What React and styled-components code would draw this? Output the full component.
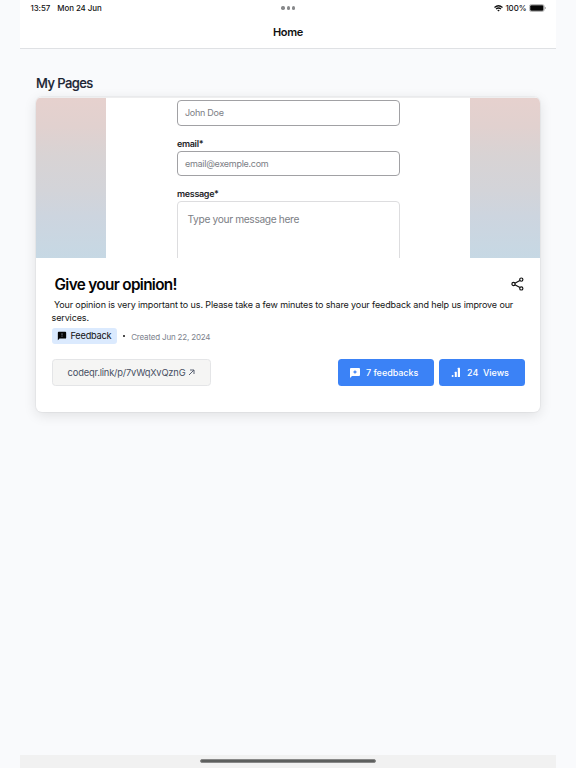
import React from "react";
import styled, { createGlobalStyle } from "styled-components";

const GlobalStyle = createGlobalStyle`
  * { box-sizing: border-box; }
  body {
    margin: 0;
    background: #f9fafc;
    font-family: Inter, "Liberation Sans", sans-serif;
    color: #111;
  }
`;

const Screen = styled.div`
  width: 536px;
  height: 768px;
  margin: 0 auto;
  display: flex;
  flex-direction: column;
  overflow: visible;
`;

const Header = styled.header`
  height: 49px;
  flex: none;
  background: #fff;
  border-bottom: 1px solid #dfe1e4;
  display: flex;
  flex-direction: column;
`;

const StatusBar = styled.div`
  height: 16px;
  display: grid;
  grid-template-columns: 1fr auto 1fr;
  align-items: center;
  padding: 0 10px 0 10.5px;
  font-size: 7.9px;
  font-weight: 500;
  letter-spacing: -0.05px;
  line-height: 16px;
  color: #111;
`;

const Clock = styled.div`
  display: flex;
  gap: 7px;
  white-space: nowrap;
`;

const Dots = styled.div`
  display: flex;
  gap: 2px;
  span {
    width: 3.4px;
    height: 3.4px;
    border-radius: 50%;
    background: #88898b;
  }
`;

const Indicators = styled.div`
  display: flex;
  justify-content: flex-end;
  align-items: center;
  gap: 2.5px;
`;

const HeaderTitle = styled.h1`
  margin: 8px 0 0;
  text-align: center;
  font-size: 11px;
  line-height: 16px;
  font-weight: 600;
  letter-spacing: -0.3px;
`;

const Main = styled.main`
  flex: 1;
  padding: 25px 16px 0;
`;

const SectionTitle = styled.h2`
  margin: 0 0 5px;
  height: 18px;
  font-size: 13px;
  line-height: 18px;
  font-weight: 500;
  letter-spacing: -0.56px;
  color: #1b2433;
  -webkit-text-stroke: 0.15px #1b2433;
`;

const Card = styled.article`
  height: 315px;
  border-radius: 6px;
  background: #fff;
  overflow: hidden;
  box-shadow: 0 0 0 1px rgba(0, 0, 0, 0.03), 0 3px 13px rgba(0, 0, 0, 0.11);
`;

const Preview = styled.div`
  height: 161px;
  padding: 0 70px;
  border-top: 1px solid #eeeeef;
  background: linear-gradient(#e6d1ce 0%, #e1d1cf 18%, #d8d3d4 36%, #d3d4d9 58%, #cdd5df 74%, #c6d8e4 100%);
`;

const PreviewPage = styled.div`
  height: 100%;
  background: #fff;
  padding: 2px 70px 0 71px;
  overflow: hidden;
`;

const Field = styled.div`
  height: ${(p) => (p.$tall ? 70 : 25.5)}px;
  border: 1px solid ${(p) => (p.$tall ? "#dddddf" : "#a1a1a4")};
  border-radius: 4px;
  padding: ${(p) => (p.$tall ? "5px 9.5px" : "0 7px")};
  font-size: ${(p) => (p.$tall ? 10.2 : 9)}px;
  letter-spacing: ${(p) => (p.$tall ? -0.34 : -0.27)}px;
  line-height: ${(p) => (p.$tall ? 25 : 24)}px;
  color: #7c7e85;
`;

const FieldLabel = styled.div`
  height: 25px;
  padding-top: 12px;
  font-size: 9px;
  line-height: 11px;
  font-weight: 600;
  letter-spacing: -0.33px;
  color: #242528;
`;

const Body = styled.div`
  padding: 17px 15.5px 0;
`;

const TitleRow = styled.div`
  display: flex;
  justify-content: space-between;
  align-items: flex-start;
  height: 20px;
  padding-left: 3px;
`;

const CardTitle = styled.h3`
  margin: 0;
  font-size: 15.3px;
  line-height: 20px;
  font-weight: 600;
  letter-spacing: -0.66px;
  color: #050505;
`;

const Description = styled.p`
  margin: 3px 0 0;
  font-size: 9px;
  line-height: 13px;
  letter-spacing: -0.12px;
  color: #151515;
  white-space: pre;
`;

const Meta = styled.div`
  display: flex;
  align-items: center;
  height: 16px;
  margin-top: 3.5px;
`;

const Tag = styled.span`
  display: flex;
  align-items: center;
  gap: 4px;
  width: 65px;
  height: 16px;
  padding-left: 5px;
  border-radius: 3px;
  background: #dbeafe;
  font-size: 9.2px;
  letter-spacing: -0.2px;
  line-height: 15px;
  white-space: nowrap;
`;

const Bullet = styled.span`
  width: 2px;
  height: 2px;
  border-radius: 50%;
  background: #111;
  margin: 0 6.2px 0 6.5px;
`;

const Created = styled.time`
  font-size: 8px;
  letter-spacing: -0.18px;
  line-height: 12px;
  padding-top: 2px;
  color: #7c828d;
  white-space: nowrap;
`;

const Actions = styled.div`
  display: flex;
  gap: 5px;
  margin-top: 15.5px;
`;

const LinkBox = styled.a`
  display: flex;
  align-items: center;
  justify-content: center;
  gap: 2.5px;
  width: 159.5px;
  height: 27px;
  margin-right: auto;
  border: 1px solid #e4e5e7;
  border-radius: 3.5px;
  background: #f5f5f4;
  color: #475063;
  font-size: 9.3px;
  letter-spacing: -0.17px;
  white-space: nowrap;
`;

const Button = styled.button`
  display: flex;
  align-items: center;
  gap: ${(p) => p.$gap}px;
  width: ${(p) => p.$width}px;
  height: 27px;
  padding: 0 0 0 11px;
  border: 0;
  border-radius: 3.5px;
  background: #3b82f6;
  color: #fff;
  font: 500 9px Inter, "Liberation Sans", sans-serif;
  letter-spacing: -0.03px;
  white-space: pre;
`;

const HomeBar = styled.footer`
  height: 13px;
  flex: none;
  background: #f1f1f1;
  display: flex;
  justify-content: center;
  padding-top: 4px;
  span {
    width: 176px;
    height: 4px;
    border-radius: 2px;
    background: #5d5f5e;
    border: 0.5px solid #888;
  }
`;

const WifiIcon = () => (
  <svg width="9" height="7" viewBox="0 0 18 14">
    <path d="M1 5Q9 -2 17 5M4 8Q9 4 14 8" fill="none" stroke="#111" strokeWidth="2.5" />
    <path d="M6.5 10.3Q9 8.3 11.5 10.3L9 13Z" fill="#111" />
  </svg>
);

const BatteryIcon = () => (
  <svg width="17" height="8" viewBox="0 0 17 8">
    <rect x=".4" y=".5" width="14.8" height="7" rx="2" fill="#fff" stroke="#999" strokeWidth=".7" />
    <rect x="1.2" y="1.3" width="13.2" height="5.4" rx="1.2" fill="#050505" />
    <path d="M15.9 2.8q1 .4 1 1.2t-1 1.2z" fill="#999" />
  </svg>
);

const ShareIcon = () => (
  <svg width="14" height="18" viewBox="0 -2 14 18" fill="none" stroke="#111" strokeWidth="1.15">
    <circle cx="2.5" cy="7" r="1.6" />
    <circle cx="10.3" cy="2.6" r="1.6" />
    <circle cx="10.3" cy="11.4" r="1.6" />
    <path d="M3.9 6.2L8.9 3.4M3.9 7.8L8.9 10.6" />
  </svg>
);

const FeedbackIcon = () => (
  <svg width="10" height="10" viewBox="0 0 24 24">
    <path d="M20 2H4a2 2 0 0 0-2 2v18l4-4h14a2 2 0 0 0 2-2V4a2 2 0 0 0-2-2z" fill="#050505" />
    <path d="M11.2 5.5h1.6v5h-1.6zM11.2 12.5h1.6v1.8h-1.6z" fill="#a9b5c9" />
  </svg>
);

const ReviewIcon = () => (
  <svg width="12" height="12" viewBox="0 0 24 24">
    <path d="M20 2H4a2 2 0 0 0-2 2v18l4-4h14a2 2 0 0 0 2-2V4a2 2 0 0 0-2-2z" fill="#fff" />
    <path d="M12 5.4l1.3 3.2L16.6 10l-3.3 1.4L12 14.6l-1.3-3.2L7.4 10l3.3-1.4z" fill="#3b82f6" />
  </svg>
);

const BarsIcon = () => (
  <svg width="11" height="11" viewBox="0 0 11 11" fill="#fff">
    <rect x="1.6" y="8" width="2" height="2.1" rx="1" />
    <rect x="4.8" y="4.8" width="2" height="5.3" rx=".4" />
    <rect x="7.8" y=".8" width="2.2" height="9.3" rx=".4" />
  </svg>
);

const ArrowIcon = () => (
  <svg width="7" height="7" viewBox="0 0 7 7" fill="none" stroke="#475063" strokeWidth=".9">
    <path d="M1 6L5.8 1.2M2 1H6V5" />
  </svg>
);

export default function App() {
  return (
    <>
      <GlobalStyle />
      <Screen>
        <Header>
          <StatusBar>
            <Clock><span>13:57</span><span>Mon 24 Jun</span></Clock>
            <Dots><span /><span /><span /></Dots>
            <Indicators><WifiIcon /><span>100%</span><BatteryIcon /></Indicators>
          </StatusBar>
          <HeaderTitle>Home</HeaderTitle>
        </Header>
        <Main>
          <SectionTitle>My Pages</SectionTitle>
          <Card>
            <Preview>
              <PreviewPage>
                <Field>John Doe</Field>
                <FieldLabel>email*</FieldLabel>
                <Field>email@exemple.com</Field>
                <FieldLabel>message*</FieldLabel>
                <Field $tall>Type your message here</Field>
              </PreviewPage>
            </Preview>
            <Body>
              <TitleRow>
                <CardTitle>Give your opinion!</CardTitle>
                <ShareIcon />
              </TitleRow>
              <Description>{" Your opinion is very important to us. Please take a few minutes to share your feedback and help us improve our\nservices."}</Description>
              <Meta>
                <Tag><FeedbackIcon />Feedback</Tag>
                <Bullet />
                <Created>Created Jun 22, 2024</Created>
              </Meta>
              <Actions>
                <LinkBox>codeqr.link/p/7vWqXvQznG<ArrowIcon /></LinkBox>
                <Button $width={96} $gap={5}><ReviewIcon />7 feedbacks</Button>
                <Button $width={85.5} $gap={6}><BarsIcon />{"24  Views"}</Button>
              </Actions>
            </Body>
          </Card>
        </Main>
        <HomeBar><span /></HomeBar>
      </Screen>
    </>
  );
}
